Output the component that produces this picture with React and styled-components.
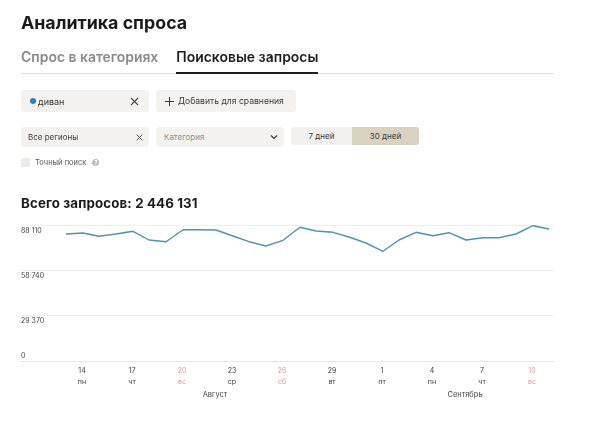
import React from "react";
import styled, { createGlobalStyle } from "styled-components";

const Global = createGlobalStyle`
  html, body { margin: 0; padding: 0; background: #fff; }
  body { font-family: Inter, "Noto Sans", sans-serif; color: #1c1c1c; }
  * { box-sizing: border-box; }
`;

const Page = styled.div`
  width: 600px;
  height: 421px;
  padding: 11px 46px 0 21px;
  overflow: hidden;
  filter: blur(0.35px);
`;
const Title = styled.h1`
  margin: 0;
  font-size: 17.8px;
  line-height: 23px;
  font-weight: 700;
  color: #1a1a1a;
`;
const Tabs = styled.div`
  display: flex;
  gap: 18px;
  margin-top: 12px;
  border-bottom: 1px solid #e2e2e2;
  height: 28px;
`;
const Tab = styled.div`
  font-size: 13.95px;
  line-height: 22px;
  font-weight: 600;
  color: ${(p) => (p.$active ? "#1e1e1e" : "#8a8a8a")};
  border-bottom: ${(p) => (p.$active ? "2px solid #1e1e1e" : "0")};
  height: 28px;
`;
const Row = styled.div`
  display: flex;
  gap: 7px;
  margin-top: ${(p) => p.$top}px;
`;
const Chip = styled.div`
  display: flex;
  align-items: center;
  width: ${(p) => p.$w}px;
  height: ${(p) => p.$h}px;
  padding: 0 ${(p) => p.$pr || 8}px 0 ${(p) => p.$pl || 8}px;
  background: #f4f2ee;
  border-radius: 3px;
  font-size: ${(p) => p.$fs || 8}px;
  color: ${(p) => p.$color || "#3a3a3a"};
  gap: ${(p) => p.$gap || 0}px;
`;
const Grow = styled.span`
  flex: 1;
`;
const Dot = styled.span`
  width: 6px;
  height: 6px;
  border-radius: 50%;
  background: #2a82bd;
  margin: 0 2px 0 1px;
`;
const Segments = styled.div`
  display: flex;
  width: 128px;
  height: 18px;
  border-radius: 3px;
  overflow: hidden;
  font-size: 8px;
  color: #3a3a3a;
`;
const Segment = styled.div`
  width: ${(p) => p.$w}px;
  display: flex;
  align-items: center;
  justify-content: center;
  background: ${(p) => (p.$active ? "#d9d2c0" : "#f1f0ee")};
`;
const CheckRow = styled.div`
  display: flex;
  align-items: center;
  margin-top: 10px;
  height: 10px;
  font-size: 7.5px;
  color: #555;
`;
const Check = styled.span`
  width: 9px;
  height: 9px;
  border-radius: 1px;
  background: #ebebe9;
  margin-right: 5px;
`;
const Help = styled.span`
  width: 7px;
  height: 7px;
  margin-left: 6px;
  border-radius: 50%;
  background: #bdbdbd;
  color: #fff;
  font-size: 6px;
  line-height: 7px;
  text-align: center;
  font-weight: 700;
`;
const Total = styled.h2`
  margin: 27px 0 0;
  font-size: 13.3px;
  line-height: 18px;
  font-weight: 700;
  letter-spacing: 0.13px;
  color: #1a1a1a;
`;
const Chart = styled.div`
  position: relative;
  margin-top: 13px;
  width: 533px;
  border-bottom: 1px solid #e6e6e6;
`;
const Band = styled.div`
  display: flex;
  flex-direction: column;
  justify-content: space-between;
  height: ${(p) => p.$h || 45}px;
  border-top: 1px solid #eeeeee;
  padding: 0 0 1px;
  font-size: 7px;
  line-height: 9px;
  color: #444;
`;
const ChartLine = styled.svg`
  position: absolute;
  left: 0;
  top: 0;
`;
const Ticks = styled.div`
  display: grid;
  grid-template-columns: repeat(10, 50px);
  margin: 3px 0 0 36px;
  text-align: center;
  font-size: 7px;
  line-height: 11px;
  color: #3a3a3a;
`;
const Tick = styled.div`
  color: ${(p) => (p.$off ? "#d39a9a" : "#3a3a3a")};
`;
const Months = styled.div`
  display: grid;
  grid-template-columns: repeat(2, 250px);
  margin: 3px 0 0 69px;
  text-align: center;
  font-size: 7.5px;
  line-height: 10px;
  color: #444;
`;

const X = ({ s = 9 }) => (
  <svg width={s} height={s} viewBox="0 0 10 10" fill="none" stroke="#333" strokeWidth="1.2">
    <path d="M1 1l8 8M9 1l-8 8" />
  </svg>
);
const Plus = () => (
  <svg width="9" height="9" viewBox="0 0 10 10" fill="none" stroke="#333" strokeWidth="1.1">
    <path d="M5 0v10M0 5h10" />
  </svg>
);
const Chevron = () => (
  <svg width="8" height="6" viewBox="0 0 8 6" fill="none" stroke="#333" strokeWidth="1.1">
    <path d="M1 1.5l3 3 3-3" />
  </svg>
);

const points = [
  [66, 234], [83, 233], [99, 236.3], [116, 234], [133, 231.3], [149, 240], [166, 241.7],
  [183, 229.7], [199.5, 229.7], [216, 230], [233, 236], [249, 241.7], [266, 246], [283, 240.3],
  [300, 227.3], [316, 231], [333, 232.3], [349, 237], [366, 243], [383, 251.3], [399, 240],
  [416, 232.3], [433, 235.7], [449, 232.7], [466, 240], [483, 237.7], [499, 237.7], [516, 234],
  [533, 225.7], [549, 229],
];
const path = points.map(([x, y]) => `${x - 21},${y - 225}`).join(" ");

const ticks = [
  ["14", "пн"], ["17", "чт"], ["20", "вс", true], ["23", "ср"], ["26", "сб", true],
  ["29", "вт"], ["1", "пт"], ["4", "пн"], ["7", "чт"], ["10", "вс", true],
];

export default function App() {
  return (
    <Page>
      <Global />
      <Title>Аналитика спроса</Title>
      <Tabs>
        <Tab>Спрос в категориях</Tab>
        <Tab $active>Поисковые запросы</Tab>
      </Tabs>
      <Row $top={16}>
        <Chip $w={128} $h={22} $fs={9} $pr={10} $color="#333">
          <Dot />
          диван
          <Grow />
          <X />
        </Chip>
        <Chip $w={140} $h={22} $fs={8.6} $pl={9} $gap={4}>
          <Plus />
          Добавить для сравнения
        </Chip>
      </Row>
      <Row $top={15}>
        <Chip $w={128} $h={20} $pl={7} $pr={6}>
          Все регионы
          <Grow />
          <X s={7} />
        </Chip>
        <Chip $w={128} $h={20} $pr={6} $color="#8f8f8f">
          Категория
          <Grow />
          <Chevron />
        </Chip>
        <Segments>
          <Segment $w={61}>7 дней</Segment>
          <Segment $w={67} $active>30 дней</Segment>
        </Segments>
      </Row>
      <CheckRow>
        <Check />
        Точный поиск
        <Help>?</Help>
      </CheckRow>
      <Total>Всего запросов: 2 446 131</Total>
      <Chart>
        <Band><span>88 110</span></Band>
        <Band><span>58 740</span></Band>
        <Band $h={46}>
          <span>29 370</span>
          <span>0</span>
        </Band>
        <ChartLine width="533" height="60" viewBox="0 0 533 60" fill="none">
          <polyline points={path} stroke="#4f93ad" strokeWidth="1.4" strokeLinejoin="round" />
        </ChartLine>
      </Chart>
      <Ticks>
        {ticks.map(([d, w, off]) => (
          <Tick key={d} $off={off}>
            {d}
            <br />
            {w}
          </Tick>
        ))}
      </Ticks>
      <Months>
        <div>Август</div>
        <div>Сентябрь</div>
      </Months>
    </Page>
  );
}
